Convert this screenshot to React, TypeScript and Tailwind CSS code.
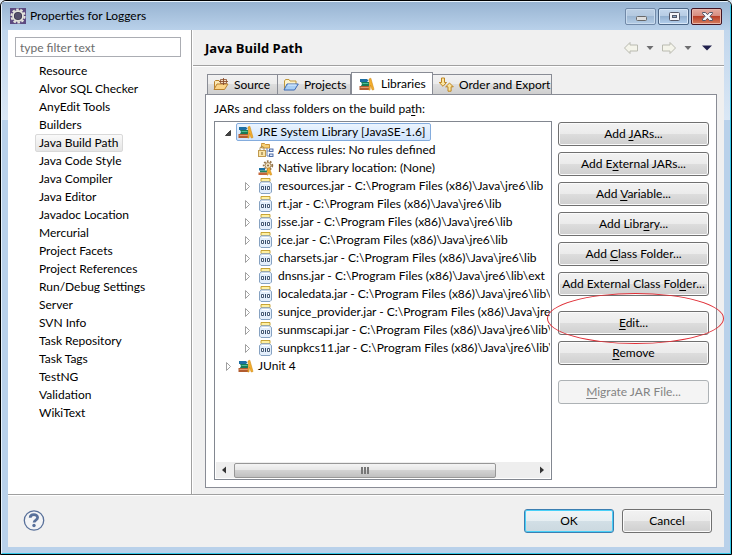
import React from "react";

const pages = [
  "Resource", "Alvor SQL Checker", "AnyEdit Tools", "Builders", "Java Build Path",
  "Java Code Style", "Java Compiler", "Java Editor", "Javadoc Location", "Mercurial",
  "Project Facets", "Project References", "Run/Debug Settings", "Server", "SVN Info",
  "Task Repository", "Task Tags", "TestNG", "Validation", "WikiText",
];

const jars: [string, string][] = [
  ["resources.jar", "lib"], ["rt.jar", "lib"], ["jsse.jar", "lib"], ["jce.jar", "lib"],
  ["charsets.jar", "lib"], ["dnsns.jar", "lib\\ext"], ["localedata.jar", "lib\\ext"],
  ["sunjce_provider.jar", "lib\\ext"], ["sunmscapi.jar", "lib\\ext"], ["sunpkcs11.jar", "lib\\ext"],
];

function Icon({ children }: { children: React.ReactNode }) {
  return (
    <svg className="h-4 w-4 shrink-0" viewBox="0 0 16 16" aria-hidden="true">
      {children}
    </svg>
  );
}

function EclipseIcon() {
  return (
    <Icon>
      <rect width="16" height="16" fill="#5c4a80" />
      <circle cx="8" cy="8" r="6.6" fill="none" stroke="#e4e4dc" strokeWidth="2" strokeDasharray="2.6 1.55" />
      <circle cx="8" cy="8" r="5" fill="#3d3850" stroke="#e4e4dc" strokeWidth="1.8" />
      <circle cx="8" cy="8" r="3.2" fill="#55506c" />
    </Icon>
  );
}

function BooksIcon() {
  return (
    <Icon>
      <path d="M1 3h7l1.500 1.500L8 6H1z" fill="#1c6fa3" />
      <path d="M2 6h8v4H2l1-2z" fill="#177a56" />
      <path d="M3.500 7.500h6" stroke="#4fc096" />
      <path d="M.5 10H10v4H.5z" fill="#b25c30" />
      <path d="M1.500 11.500H10" stroke="#e39a6c" />
      <path d="M10 3l1.800-.8L15 13.500l-1.800.5-1.700-5-.5 5H9.800l.7-6z" fill="#f4ae2c" stroke="#d08a16" strokeWidth=".6" />
    </Icon>
  );
}

function SourceIcon() {
  return (
    <Icon>
      <path d="M1.500 12.500v-8l1-1h3.500l1 1h2v4" fill="#fbe9b8" stroke="#b9822f" />
      <path d="M1 12.500l3-5.500h11l-3.500 5.500z" fill="#fbd58a" stroke="#b9822f" />
      <path d="M7.500 2.500h6v4h-6z" fill="#f1dcc4" stroke="#8a4f2c" strokeWidth=".8" />
      <path d="M10.500 1v7M6 4.500h9" stroke="#8a4f2c" strokeWidth=".9" />
    </Icon>
  );
}

function ProjectsIcon() {
  return (
    <Icon>
      <path d="M1.500 12.500V4l1-1.500h3.500l1 1.500h6v3.500" fill="#fdf3cc" stroke="#c0983d" />
      <path d="M1 13l3-6h11.300l-3.800 6z" fill="#a9cff5" stroke="#3d68b2" />
      <path d="M5 8h8.500" stroke="#e4f2ff" />
    </Icon>
  );
}

function OrderIcon() {
  return (
    <Icon>
      <path d="M3.500 1h3v4.500h2L5 9.300 1.200 5.500h2.300z" fill="#fbe6a0" stroke="#bd8523" />
      <path d="M11.500 6l3.800 3.800h-2.200v4.400H10V9.800H7.700z" fill="#fbe6a0" stroke="#bd8523" />
    </Icon>
  );
}

function AccessIcon() {
  return (
    <Icon>
      <path d="M3.500 2.500V1.500h3l1 1h4v3.500h-8z" fill="#f8cf73" stroke="#c48a2a" strokeWidth=".9" />
      <path d="M9 6v8H11M9 9H11" fill="none" stroke="#6b82ae" />
      <rect x="11.5" y="7" width="3.500" height="2.500" fill="#dfe9fa" stroke="#42629f" strokeWidth=".9" />
      <rect x="11.5" y="12" width="3.500" height="2.500" fill="#dfe9fa" stroke="#42629f" strokeWidth=".9" />
      <path d="M2 8.500V6.500a2 2 0 0 1 4 0v2" fill="none" stroke="#a88e58" />
      <rect x=".5" y="8.500" width="7" height="6" fill="#f9e4a8" stroke="#c09a50" />
      <path d="M4 10v3" stroke="#80602b" />
    </Icon>
  );
}

function NativeIcon() {
  return (
    <Icon>
      <circle cx="10" cy="5.500" r="4.300" fill="none" stroke="#95764b" strokeWidth="1.800" strokeDasharray="1.700 1.400" />
      <circle cx="10" cy="5.500" r="3" fill="#f4e5c4" stroke="#a28152" />
      <circle cx="10" cy="5.500" r="1" fill="#8b6b43" />
      <path d="M1 8h6v2.500H1z" fill="#1c6fa3" />
      <path d="M2 10.500h7v2H2z" fill="#1d855e" />
      <path d="M.5 12.500H9v2.500H.5z" fill="#c5673a" />
      <path d="M9.500 8.500l1.800-.8 2.500 7-1.600.4-1.500-3-.7 3H9z" fill="#f4ae2c" stroke="#d08a16" strokeWidth=".6" />
    </Icon>
  );
}

function JarIcon() {
  return (
    <Icon>
      <path d="M3 .5h9v3H3z" fill="#fff0a0" stroke="#c29a25" strokeWidth=".9" />
      <path d="M3.500 3.800L1.500 5.500v8.500L3 15.500h9l1.500-1.500V5.500l-2-1.700z" fill="#e3eefb" stroke="#86a2c2" />
      <path d="M4 5.500h7" stroke="#fff" />
      <path d="M3.500 8.500h2v3h-2zM9.500 8.500h2v3h-2z" fill="#fff" stroke="#344967" strokeWidth=".9" />
      <path d="M7.500 8v4" stroke="#344967" />
    </Icon>
  );
}

function Closed() {
  return (
    <svg className="h-4 w-4 shrink-0" viewBox="0 0 16 16" aria-hidden="true">
      <path d="M6.500 4.500v8l4-4z" fill="#fff" stroke="#a0a0a0" />
    </svg>
  );
}

function Opened() {
  return (
    <svg className="h-4 w-4 shrink-0" viewBox="0 0 16 16" aria-hidden="true">
      <path d="M10.500 6.500v5H5.500z" fill="#444" stroke="#262626" strokeWidth=".8" />
    </svg>
  );
}

const buttonLook =
  "h-6 rounded-[3px] border border-[#707070] bg-[linear-gradient(#f2f2f2,#ebebeb_50%,#dddddd_50%,#cfcfcf)] shadow-[inset_0_0_0_1px_#fbfbfb] leading-5 whitespace-nowrap";

function ActionButton({ before, mnemonic, after, disabled }: { before?: string; mnemonic: string; after: string; disabled?: boolean }) {
  return (
    <button
      type="button"
      disabled={disabled}
      className={
        disabled
          ? "block h-6 w-full rounded-[3px] border border-[#adb2b5] bg-[#f4f4f4] leading-5 whitespace-nowrap text-[#838383]"
          : "block w-full " + buttonLook
      }
    >
      {before}
      <span className="underline underline-offset-2">{mnemonic}</span>
      {after}
    </button>
  );
}

function Tab({ icon, label, width, selected }: { icon: React.ReactNode; label: string; width: string; selected?: boolean }) {
  return (
    <button
      type="button"
      role="tab"
      aria-selected={!!selected}
      className={
        width +
        (selected
          ? " -mb-px flex h-[23px] items-center gap-1.5 border border-b-0 border-[#898c95] bg-white pb-px pl-[7px]"
          : " flex h-5 items-center gap-[5px] border border-b-0 border-[#898c95] bg-[linear-gradient(#f2f2f2,#ebebeb_50%,#dddddd_50%,#cfcfcf)] pl-[5px] not-first:border-l-0")
      }
    >
      {icon}
      <span className="whitespace-nowrap">{label}</span>
    </button>
  );
}

function TitleBar() {
  return (
    <header className="flex h-7 shrink-0 items-center bg-[linear-gradient(#98b4d2,#b9d1ea)] pr-2 pl-2">
      <EclipseIcon />
      <h1 className="ml-1 flex-1">Properties for Loggers</h1>
      <div className="flex gap-0.5">
        <button type="button" aria-label="Minimize" className="flex h-[17px] w-[31px] items-center justify-center rounded-[2px] border border-[#7189a8] bg-[linear-gradient(#bdd0e5,#b3c8df_50%,#9db7d3_50%,#b4cde6)] shadow-[inset_0_0_0_1px_#c9dbee]">
          <svg className="h-4 w-4" viewBox="0 0 16 16" aria-hidden="true"><rect x="3.500" y="8.500" width="10" height="4" rx="1" fill="#dedede" stroke="#686868" /></svg>
        </button>
        <button type="button" aria-label="Maximize" className="flex h-[17px] w-[31px] items-center justify-center rounded-[2px] border border-[#4b6585] bg-[linear-gradient(#c5d8ed,#b5cbe3_50%,#94b1d0_50%,#b4d0ee)] shadow-[inset_0_0_0_1px_#d8e7f7]">
          <svg className="h-4 w-4" viewBox="0 0 16 16" aria-hidden="true"><rect x="3.500" y="4.500" width="10" height="8" rx="1" fill="#f4f4f8" stroke="#535666" /><rect x="6.500" y="7.500" width="4" height="2" fill="#8eabc9" stroke="#535666" /></svg>
        </button>
        <button type="button" aria-label="Close" className="flex h-[17px] w-[31px] items-center justify-center rounded-[2px] border border-[#431422] bg-[linear-gradient(#e5aaa0,#d58a7d_50%,#b93e27_50%,#d67f60)] shadow-[inset_0_0_0_1px_#e9b5a9]">
          <svg className="h-4 w-4" viewBox="0 0 16 16" aria-hidden="true"><path d="M3.500 4.500h3L8.500 6.700l2-2.200h3v1l-2.600 2.800 2.600 2.700v1.500h-3l-2-2.200-2 2.200h-3V11l2.600-2.700-2.600-2.800z" fill="#f6f6fa" stroke="#535666" /></svg>
        </button>
      </div>
    </header>
  );
}

function Sidebar() {
  return (
    <aside className="w-[184px] shrink-0 border-r border-[#a0a0a0] bg-white pt-[7px] pl-[7px]">
      <input
        type="text"
        aria-label="Filter pages"
        placeholder="type filter text"
        className="block h-5 w-[166px] border border-[#abadb3] px-1 placeholder:text-[#6d6d6d]"
      />
      <ul className="mt-[5px] ml-5">
        {pages.map((page) => (
          <li key={page}>
            <button
              type="button"
              className={
                page === "Java Build Path"
                  ? "block h-[18px] rounded-[2px] border border-[#d9d9d9] bg-[linear-gradient(#fafafa,#e5e5e5)] px-[3px] leading-4"
                  : "block h-[18px] border border-transparent px-[3px] leading-4"
              }
            >
              {page}
            </button>
          </li>
        ))}
      </ul>
    </aside>
  );
}

function HistoryBar() {
  return (
    <div className="flex items-center">
      <button type="button" aria-label="Back" disabled>
        <svg className="h-4 w-4" viewBox="0 0 16 16" aria-hidden="true"><path d="M1.500 8l5.500-5.500V5h7.500v6H7v2.500z" fill="#f4f4ea" stroke="#b9bab0" /></svg>
      </button>
      <button type="button" aria-label="Back history" className="px-[7px]">
        <svg className="h-2 w-2" viewBox="0 0 8 8" aria-hidden="true"><path d="M.5 2h7L4 6z" fill="#6e6e70" /></svg>
      </button>
      <button type="button" aria-label="Forward" disabled>
        <svg className="h-4 w-4" viewBox="0 0 16 16" aria-hidden="true"><path d="M14.500 8L9 2.500V5H1.500v6H9v2.500z" fill="#f4f4ea" stroke="#b9bab0" /></svg>
      </button>
      <button type="button" aria-label="Forward history" className="px-[7px]">
        <svg className="h-2 w-2" viewBox="0 0 8 8" aria-hidden="true"><path d="M.5 2h7L4 6z" fill="#6e6e70" /></svg>
      </button>
      <button type="button" aria-label="Menu" className="pl-0.5">
        <svg className="h-3 w-3" viewBox="0 0 12 12" aria-hidden="true"><path d="M1 3.500h10L6 8.500z" fill="#20204c" /></svg>
      </button>
    </div>
  );
}

function Tree() {
  return (
    <div className="flex min-w-0 flex-1 flex-col border border-[#828790] bg-white p-px">
      <ul role="tree" className="flex-1 overflow-hidden whitespace-nowrap">
        <li role="treeitem" aria-expanded="true" aria-selected="true" className="flex h-[18px] items-center pl-1">
          <Opened />
          <span className="flex h-[18px] items-center gap-1 rounded-[2px] border border-[#84acdd] bg-[linear-gradient(#ebf4fe,#cfe4fe)] pr-1 pl-px">
            <BooksIcon />
            JRE System Library [JavaSE-1.6]
          </span>
        </li>
        <li role="treeitem" className="flex h-[18px] items-center gap-1 pl-[42px]">
          <AccessIcon />
          Access rules: No rules defined
        </li>
        <li role="treeitem" className="flex h-[18px] items-center gap-1 pl-[42px]">
          <NativeIcon />
          Native library location: (None)
        </li>
        {jars.map(([name, folder]) => (
          <li key={name} role="treeitem" aria-expanded="false" className="flex h-[18px] items-center pl-[23px]">
            <Closed />
            <span className="ml-[3px] flex items-center gap-1">
              <JarIcon />
              {name + " - C:\\Program Files (x86)\\Java\\jre6\\" + folder}
            </span>
          </li>
        ))}
        <li role="treeitem" aria-expanded="false" className="flex h-[18px] items-center pl-1">
          <Closed />
          <span className="ml-0.5 flex items-center gap-1">
            <BooksIcon />
            JUnit 4
          </span>
        </li>
      </ul>
      <div className="flex h-4 items-center bg-[#eeeeee]">
        <button type="button" aria-label="Scroll left" className="flex w-[18px] shrink-0 pl-1">
          <svg className="h-2 w-2" viewBox="0 0 8 8" aria-hidden="true"><path d="M6 .5v7L2 4z" fill="#333" /></svg>
        </button>
        <div className="flex flex-1">
          <div className="flex h-[15px] w-[88%] items-center justify-center gap-px rounded-[2px] border border-[#979797] bg-[linear-gradient(#f4f4f4,#e7e7e7_45%,#d2d2d2_50%,#c0c0c0)]">
            <span className="h-[7px] w-0.5 bg-[#777777]" />
            <span className="h-[7px] w-0.5 bg-[#777777]" />
            <span className="h-[7px] w-0.5 bg-[#777777]" />
          </div>
        </div>
        <button type="button" aria-label="Scroll right" className="flex w-[18px] shrink-0 justify-end pr-1">
          <svg className="h-2 w-2" viewBox="0 0 8 8" aria-hidden="true"><path d="M2 .5v7L6 4z" fill="#333" /></svg>
        </button>
      </div>
    </div>
  );
}

function Actions() {
  return (
    <div className="w-[151px] shrink-0 pt-px">
      <div className="flex flex-col gap-1.5">
        <ActionButton before="Add " mnemonic="J" after="ARs..." />
        <ActionButton before="Add E" mnemonic="x" after="ternal JARs..." />
        <ActionButton before="Add " mnemonic="V" after="ariable..." />
        <ActionButton before="Add Libr" mnemonic="a" after="ry..." />
        <ActionButton before="Add " mnemonic="C" after="lass Folder..." />
        <ActionButton before="Add External Class Fol" mnemonic="d" after="er..." />
      </div>
      <div className="mt-[15px] flex flex-col gap-1.5">
        <div className="relative">
          <ActionButton mnemonic="E" after="dit..." />
          <span className="pointer-events-none absolute -top-[18px] -right-[15px] -left-[11px] z-10 h-[51px] rounded-[50%] border border-[#e03038]" />
        </div>
        <ActionButton mnemonic="R" after="emove" />
      </div>
      <div className="mt-[15px]">
        <ActionButton mnemonic="M" after="igrate JAR File..." disabled />
      </div>
    </div>
  );
}

export default function App() {
  return (
    <div className="bg-[#dfeaf5]">
      <div className="flex min-h-screen flex-col overflow-hidden rounded-t-[6px] border border-black font-['Lato','Noto_Sans',sans-serif] text-[12px] leading-4 text-black">
        <div className="flex flex-1 flex-col rounded-t-[5px] border border-[#e8f3fc] border-r-[#35c7e8] border-b-[#35c7e8] bg-[linear-gradient(#b9d1ea,#dae7f5_118px,#b9d1ea_118px)]">
          <TitleBar />
          <div className="mx-1.5 mb-1.5 flex flex-1 flex-col bg-[#f0f0f0]">
            <div className="flex flex-1">
              <Sidebar />
              <main className="flex min-w-0 flex-1 flex-col border-l border-white">
                <div className="flex h-9 shrink-0 items-center justify-between border-b border-[#a0a0a0] pr-[11px] pl-3">
                  <h2 className="font-['Open_Sans','Noto_Sans',sans-serif] text-[13px] font-bold">Java Build Path</h2>
                  <HistoryBar />
                </div>
                <div className="flex flex-1 flex-col border-t border-white pt-[5px] pr-[7px] pb-1.5 pl-3">
                  <div role="tablist" className="flex items-end pl-0.5">
                    <Tab width="w-[71px]" icon={<SourceIcon />} label="Source" />
                    <Tab width="w-[73px]" icon={<ProjectsIcon />} label="Projects" />
                    <Tab width="w-[82px]" icon={<BooksIcon />} label="Libraries" selected />
                    <Tab width="w-[119px]" icon={<OrderIcon />} label="Order and Export" />
                  </div>
                  <div role="tabpanel" className="flex flex-1 flex-col border border-[#898c95] bg-white pt-1.5 pr-[7px] pb-[7px] pl-2">
                    <p className="mb-1">
                      JARs and class folders on the build pa<span className="underline underline-offset-2">t</span>h:
                    </p>
                    <div className="flex flex-1 gap-1.5">
                      <Tree />
                      <Actions />
                    </div>
                  </div>
                </div>
              </main>
            </div>
            <footer className="flex h-[53px] shrink-0 items-center border-t border-[#a0a0a0] pr-3 pl-[15px] shadow-[inset_0_1px_0_#ffffff]">
              <button type="button" aria-label="Help">
                <svg className="h-[22px] w-[22px]" viewBox="0 0 22 22" aria-hidden="true">
                  <circle cx="11" cy="10.500" r="9.700" fill="#f3f4f6" stroke="#58709a" strokeWidth="1.300" />
                  <path d="M7.200 7.800c0-4.200 7.400-4.200 7.400-.2 0 2.700-3.500 2.400-3.500 5" fill="none" stroke="#58709a" strokeWidth="2.800" />
                  <circle cx="11" cy="15.500" r="1.700" fill="#58709a" />
                </svg>
              </button>
              <div className="ml-auto flex gap-2">
                <button type="button" className="h-6 w-[90px] rounded-[3px] border border-[#3c7fb1] bg-[linear-gradient(#f0f4f6,#e6eef2_50%,#d2dfe6_50%,#cbd8df)] leading-5 shadow-[inset_0_0_0_1px_#48d0f8]">
                  OK
                </button>
                <button type="button" className={"w-[90px] " + buttonLook}>Cancel</button>
              </div>
            </footer>
          </div>
        </div>
      </div>
    </div>
  );
}
